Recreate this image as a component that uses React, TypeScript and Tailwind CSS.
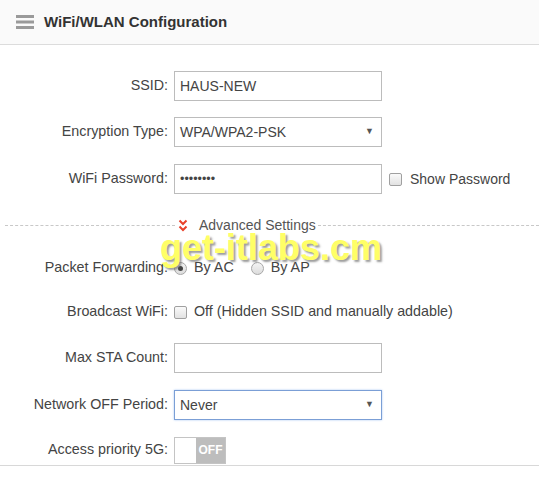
import React from 'react';

const FONT = { fontFamily: '"Liberation Sans", Arial, sans-serif' };

function Label({ children }: { children: React.ReactNode }) {
  return <div className="w-[168px] shrink-0 text-right text-[14.3px] text-[#444]">{children}</div>;
}

function Box({ children, focused }: { children?: React.ReactNode; focused?: boolean }) {
  return (
    <div
      className={
        'ml-[6px] flex h-[30px] w-[208px] items-center border px-[5px] text-[14px] text-[#444] ' +
        (focused ? 'border-[#7b9fd6] shadow-[0_0_2px_#a9c6f3]' : 'border-[#bcbcbc]')
      }
    >
      {children}
    </div>
  );
}

function Arrow() {
  return <span className="ml-auto mr-[2px] text-[9px] text-[#555]">▼</span>;
}

function Check() {
  return (
    <span className="inline-block h-[13px] w-[13px] rounded-[2px] border border-[#a0a0a0] bg-gradient-to-b from-[#fafafa] to-[#e2e2e2]" />
  );
}

function Radio({ checked }: { checked?: boolean }) {
  return (
    <span className="flex h-[13px] w-[13px] items-center justify-center rounded-full border border-[#a8a8a8] bg-gradient-to-b from-[#f4f4f4] to-[#dcdcdc]">
      {checked && <span className="h-[5px] w-[5px] rounded-full bg-[#444]" />}
    </span>
  );
}

export default function App() {
  return (
    <div className="relative h-[482px] w-[539px] overflow-hidden bg-white" style={FONT}>
      {/* Header */}
      <div className="flex h-[45px] items-center border-b border-[#dcdcdc] bg-[#fafafa] pl-[16px]">
        <svg width="18" height="14" viewBox="0 0 18 14">
          <rect x="0" y="0" width="18" height="3" fill="#9a9a9a" />
          <rect x="0" y="5.5" width="18" height="3" fill="#9a9a9a" />
          <rect x="0" y="11" width="18" height="3" fill="#9a9a9a" />
        </svg>
        <span className="ml-[10px] text-[15px] font-bold text-[#333]">WiFi/WLAN Configuration</span>
      </div>

      <div className="flex flex-col">
        <div className="mt-[26px] flex h-[30px] items-center">
          <Label>SSID:</Label>
          <Box>HAUS-NEW</Box>
        </div>
        <div className="mt-[16px] flex h-[30px] items-center">
          <Label>Encryption Type:</Label>
          <Box>
            WPA/WPA2-PSK
            <Arrow />
          </Box>
        </div>
        <div className="mt-[17px] flex h-[30px] items-center">
          <Label>WiFi Password:</Label>
          <Box>
            <span className="text-[12.5px]">••••••••</span>
          </Box>
          <span className="ml-[7px] flex items-center">
            <Check />
          </span>
          <span className="ml-[8px] text-[14px] text-[#444]">Show Password</span>
        </div>

        {/* Advanced separator */}
        <div className="mt-[23px] flex h-[16px] items-center">
          <div className="ml-[5px] w-[170px] border-t border-dashed border-[#c8c8c8]" />
          <svg width="10" height="13" viewBox="0 0 10 13" className="ml-[3px]">
            <polyline points="1.5,1.5 5,5 8.5,1.5" fill="none" stroke="#e8412a" strokeWidth="2" />
            <polyline points="1.5,7.5 5,11 8.5,7.5" fill="none" stroke="#e8412a" strokeWidth="2" />
          </svg>
          <span className="ml-[11px] text-[14px] text-[#555]">Advanced Settings</span>
          <div className="ml-[2px] flex-1 border-t border-dashed border-[#c8c8c8]" />
        </div>

        <div className="mt-[20px] flex h-[30px] items-center">
          <Label>Packet Forwarding:</Label>
          <span className="ml-[6px]">
            <Radio checked />
          </span>
          <span className="ml-[7px] text-[14.3px] text-[#444]">By AC</span>
          <span className="ml-[17px]">
            <Radio />
          </span>
          <span className="ml-[7px] text-[14.3px] text-[#444]">By AP</span>
        </div>
        <div className="mt-[14px] flex h-[30px] items-center">
          <Label>Broadcast WiFi:</Label>
          <span className="ml-[6px] flex items-center">
            <Check />
          </span>
          <span className="ml-[7px] text-[14.3px] text-[#444]">Off (Hidden SSID and manually addable)</span>
        </div>
        <div className="mt-[16px] flex h-[30px] items-center">
          <Label>Max STA Count:</Label>
          <Box />
        </div>
        <div className="mt-[17px] flex h-[30px] items-center">
          <Label>Network OFF Period:</Label>
          <Box focused>
            Never
            <Arrow />
          </Box>
        </div>
        <div className="mt-[16px] flex h-[28px] items-center">
          <Label>Access priority 5G:</Label>
          <div className="ml-[6px] flex h-[27px] w-[52px] border border-[#c4c4c4]">
            <div className="w-[21px] bg-white" />
            <div className="flex flex-1 items-center justify-center bg-[#bdbdbd] text-[12px] font-bold text-white">OFF</div>
          </div>
        </div>
        <div className="mt-[1px] border-t border-[#d8d8d8]" />
      </div>

      {/* Watermark */}
      <div
        className="pointer-events-none absolute left-[160px] top-[221px] text-[36px] font-bold text-[#ffff66]"
        style={{ textShadow: '2px 2px 2px rgba(90,90,90,0.6)' }}
      >
        get-itlabs.cm
      </div>
    </div>
  );
}
